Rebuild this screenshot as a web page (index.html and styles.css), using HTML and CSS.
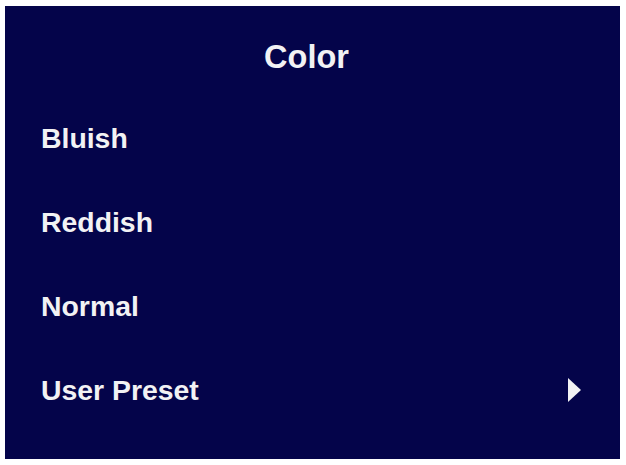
FILE: index.html
```html
<!DOCTYPE html>
<html>
<head>
<meta charset="utf-8">
<link rel="stylesheet" href="styles.css">
</head>
<body>
<div class="panel">
  <div class="title">Color</div>
  <div class="item">Bluish</div>
  <div class="item">Reddish</div>
  <div class="item">Normal</div>
  <div class="item">
    <span>User Preset</span>
    <span class="arrow"></span>
  </div>
</div>
</body>
</html>
```
FILE: styles.css
```css
html, body {
  margin: 0;
  padding: 0;
  background: #ffffff;
}
body {
  padding: 6px 6px 0 5px;
  font-family: "Liberation Sans", Arial, sans-serif;
}
.panel {
  width: 615px;
  height: 453px;
  box-sizing: border-box;
  background: #04044a;
  color: #f2f2f4;
  font-weight: bold;
  padding: 12px 39px 0 36px;
  display: flex;
  flex-direction: column;
}
.title {
  height: 78px;
  line-height: 78px;
  font-size: 32.5px;
  text-align: center;
  margin-left: -36px;
  margin-right: -39px;
  padding-right: 12px;
}
.item {
  height: 84px;
  font-size: 28.4px;
  display: flex;
  align-items: center;
  justify-content: space-between;
}
.arrow {
  width: 0;
  height: 0;
  border-top: 12px solid transparent;
  border-bottom: 12px solid transparent;
  border-left: 13px solid #f2f2f4;
}
```
